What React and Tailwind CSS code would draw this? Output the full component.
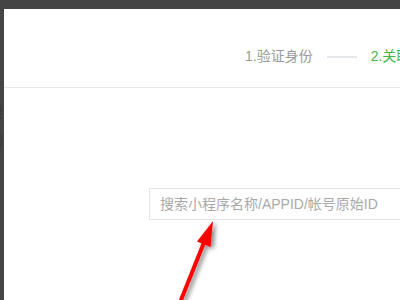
export default function App() {
  const font = { fontFamily: '"Liberation Sans", "Noto Sans CJK SC", sans-serif' };
  return (
    <div className="relative w-[400px] h-[300px] bg-[#454545] flex overflow-hidden" style={font}>
      <div className="w-[4px] shrink-0 overflow-hidden relative">
        <div className="absolute left-[-11px] top-[104px] text-[14px] leading-[16px] text-[#3a3a3a]">搜</div>
        <div className="absolute left-[-11px] top-[132px] text-[14px] leading-[16px] text-[#3a3a3a]">加</div>
      </div>
      <div className="flex-1 mt-[9px] bg-white flex flex-col">
        <div className="h-[79px] border-b border-[#e7e7e7] flex items-center pl-[241px] pt-[17px] whitespace-nowrap text-[14px]">
          <span className="text-[#9a9a9a]">1.验证身份</span>
          <span className="mx-[14px] w-[30px] h-[2px] bg-[#e4e8eb]"></span>
          <span className="text-[#44b549]">2.关联小程序</span>
        </div>
        <div className="mt-[100px] ml-[145px] h-[32px] border border-[#e4e4e4] flex items-center pl-[10px] whitespace-nowrap text-[14px] text-[#a9a9a9]">
          搜索小程序名称/APPID/帐号原始ID
        </div>
      </div>
      <svg className="absolute left-0 top-0" width="400" height="300" viewBox="0 0 400 300">
        <defs>
          <filter id="sh" x="-50%" y="-50%" width="200%" height="200%">
            <feDropShadow dx="3" dy="2" stdDeviation="2" floodColor="#000" floodOpacity="0.45" />
          </filter>
        </defs>
        <g filter="url(#sh)">
          <line x1="177" y1="310" x2="205" y2="240" stroke="#ff0000" strokeWidth="4" />
          <polygon points="213,221 197,241.6 210.5,247" fill="#ff0000" />
        </g>
      </svg>
    </div>
  );
}
